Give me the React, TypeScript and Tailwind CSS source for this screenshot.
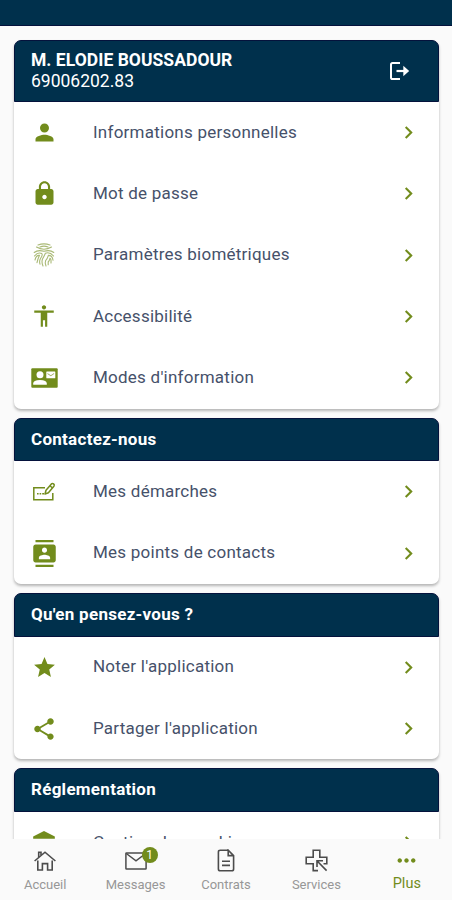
import { FC, ReactNode } from "react";
import {
  MdAccessibility,
  MdAccountBalance,
  MdChevronRight,
  MdContacts,
  MdLock,
  MdMoreHoriz,
  MdPerson,
  MdShare,
  MdStar,
} from "react-icons/md";

interface IRow {
  icon: ReactNode;
  label: string;
}

interface ISection {
  title: string;
  rows: IRow[];
}

const LogoutIcon: FC = () => (
  <svg width="21" height="20" viewBox="0 0 21 20" fill="none">
    <path
      d="M11 2H3.6Q2 2 2 3.6V16.4Q2 18 3.6 18H11"
      stroke="white"
      strokeWidth="2"
    />
    <path d="M7.5 10H15" stroke="white" strokeWidth="2.2" />
    <path d="M14.3 4.8L20.2 10L14.3 15.2Z" fill="white" />
  </svg>
);

const FingerprintIcon: FC = () => (
  <svg
    width="22"
    height="26"
    viewBox="0 0 22 26"
    fill="none"
    stroke="currentColor"
    strokeWidth="1.1"
    strokeLinecap="round"
    className="opacity-60"
  >
    <path d="M5 3Q11 0.8 17 3" />
    <path d="M3.5 5Q11 9.4 18.5 5" />
    <path d="M7 5Q11 3.2 15 5" />
    <path d="M1.2 10.5Q5 7.4 11 9.3Q17 7.4 20.8 10.5" />
    <path d="M1.5 14Q5 9.7 8.8 11.6Q10 13 7.5 16.5Q6 19 7 22.2" />
    <path d="M20.5 14Q17 9.7 12.4 11.2Q11 14.5 9.5 17Q8.3 20 10 24" />
    <path d="M2 18Q3.2 13 6.4 13.4Q5 16.2 4 20.6" />
    <path d="M20 18.2Q19.4 13.4 15.4 13.4Q14.4 16.8 12.6 18.6Q11.6 21 13 24" />
    <path d="M18 21Q18.3 16.4 17 16.4Q16.4 18.8 15.2 20V22.8" />
  </svg>
);

const ContactCardIcon: FC = () => (
  <svg width="27" height="20" viewBox="0 0 27 20" fill="currentColor">
    <rect x="0.3" y="0.3" width="26.4" height="19.4" rx="1" />
    <g fill="white">
      <circle cx="9" cy="6.7" r="3.5" />
      <path d="M2.2 16.8V15.6Q2.2 11.9 9 11.9T15.8 15.6V16.8Z" />
      <rect x="15.3" y="3.6" width="9" height="6.6" rx="0.5" />
    </g>
    <path d="M16.5 5.1L19.8 7.2L23.1 5.1V6.1L19.8 8.2L16.5 6.1Z" opacity="0.7" />
  </svg>
);

const FormIcon: FC = () => (
  <svg
    width="24"
    height="20"
    viewBox="0 0 24 20"
    fill="none"
    stroke="currentColor"
    strokeWidth="1.5"
  >
    <path d="M13 5.8H1.8V17.7H20.8V11" />
    <path d="M5 11.7H6.6M7.6 11.7H9.2M10.2 11.7H12" />
    <path
      d="M13 12L14 8.3L19.4 1.9Q20.4 1 21.6 1.9Q22.8 3 21.9 4.2L16.4 10.8L13 12ZM18 3.8L20.5 6"
      strokeLinejoin="round"
    />
  </svg>
);

const HomeIcon: FC = () => (
  <svg
    width="24"
    height="22"
    viewBox="0 0 24 22"
    fill="none"
    stroke="currentColor"
    strokeWidth="1.6"
  >
    <path d="M1.6 11L12 2.2L22.4 11" />
    <path d="M5.7 7V2.2H8V5" />
    <path d="M4.8 10.6V20H9.4V13.6H14.6V20H19.2V10.6" />
  </svg>
);

const MailIcon: FC = () => (
  <svg
    width="22"
    height="18"
    viewBox="0 0 22 18"
    fill="none"
    stroke="currentColor"
    strokeWidth="1.5"
  >
    <rect x="0.9" y="0.9" width="20.2" height="16.2" rx="0.6" />
    <path d="M1.3 1.5L11 8.8L20.7 1.5" />
  </svg>
);

const DocumentIcon: FC = () => (
  <svg
    width="18"
    height="23"
    viewBox="0 0 18 23"
    fill="none"
    stroke="currentColor"
    strokeWidth="1.6"
  >
    <path d="M11.2 1.2H3.2Q1.4 1.2 1.4 3V20Q1.4 21.8 3.2 21.8H14.8Q16.6 21.8 16.6 20V6.6L11.2 1.2V6.6H16.6" />
    <path d="M5 12.2H13M5 16.4H13" />
  </svg>
);

const ServicesIcon: FC = () => (
  <svg
    width="23"
    height="23"
    viewBox="0 0 23 23"
    fill="none"
    stroke="currentColor"
    strokeWidth="1.6"
  >
    <path d="M13 21.6H8.2V14.8H1.2V8.2H8.2V1.2H14.8V8.2H21.8V14.8H18.5" />
    <path d="M21.6 21.6L12.4 12.2M12 18V11.8H18" />
  </svg>
);

const accountRows: IRow[] = [
  { icon: <MdPerson size={27} />, label: "Informations personnelles" },
  { icon: <MdLock size={27} />, label: "Mot de passe" },
  { icon: <FingerprintIcon />, label: "Paramètres biométriques" },
  { icon: <MdAccessibility size={26} />, label: "Accessibilité" },
  { icon: <ContactCardIcon />, label: "Modes d'information" },
];

const sections: ISection[] = [
  {
    title: "Contactez-nous",
    rows: [
      { icon: <FormIcon />, label: "Mes démarches" },
      { icon: <MdContacts size={27} />, label: "Mes points de contacts" },
    ],
  },
  {
    title: "Qu'en pensez-vous ?",
    rows: [
      { icon: <MdStar size={25} />, label: "Noter l'application" },
      { icon: <MdShare size={26} />, label: "Partager l'application" },
    ],
  },
  {
    title: "Réglementation",
    rows: [
      { icon: <MdAccountBalance size={26} />, label: "Gestion des cookies" },
    ],
  },
];

const Row: FC<IRow> = ({ icon, label }) => (
  <li className="flex items-center h-[61.4px] pl-[14px] pr-[18px]">
    <span className="flex items-center justify-center w-8 text-[#728c1c]">
      {icon}
    </span>
    <span className="flex-1 ml-[33px] text-[17px] tracking-[0.24px] whitespace-nowrap text-[#46516a]">
      {label}
    </span>
    <MdChevronRight size={25} className="text-[#728c1c]" />
  </li>
);

const Card: FC<{ header: ReactNode; rows: IRow[] }> = ({ header, rows }) => (
  <section className="rounded-[7px] bg-white shadow-[0_2px_3px_rgba(0,0,0,0.28)]">
    {header}
    <ul>
      {rows.map((row) => (
        <Row key={row.label} {...row} />
      ))}
    </ul>
  </section>
);

const App: FC = () => {
  return (
    <div className="flex flex-col h-[900px] w-[452px] overflow-hidden bg-[#fafafa] font-['Roboto',sans-serif]">
      {/* status bar */}
      <div className="h-[26px] shrink-0 bg-[#00304c] border-b border-[#04123c]" />

      {/* list of cards */}
      <main className="flex-1 min-h-0 overflow-hidden pt-[14.4px] pl-[14px] pr-[13px] space-y-[9px]">
        <Card
          rows={accountRows}
          header={
            <header className="flex items-center justify-between h-[61.2px] pl-4 pr-7 rounded-t-[7px] bg-[#00304c] border border-[#04123c] text-white">
              <div className="text-[17.5px] leading-[21px]">
                <h1 className="font-bold tracking-[0.04px]">
                  M. ELODIE BOUSSADOUR
                </h1>
                <p>69006202.83</p>
              </div>
              <LogoutIcon />
            </header>
          }
        />
        {sections.map((section) => (
          <Card
            key={section.title}
            rows={section.rows}
            header={
              <header className="flex items-center h-[43.6px] pl-4 rounded-t-[7px] bg-[#00304c] border border-[#04123c] text-white">
                <h2 className="text-[17px] font-bold tracking-[0.28px]">
                  {section.title}
                </h2>
              </header>
            }
          />
        ))}
      </main>

      {/* bottom navigation */}
      <nav className="grid grid-cols-5 h-[61px] shrink-0 bg-[#fafafa] text-[13px] text-[#979797]">
        <a className="flex flex-col items-center">
          <span className="flex items-center h-[43px] -mb-[7px] text-[#4c4c4c]">
            <HomeIcon />
          </span>
          Accueil
        </a>
        <a className="flex flex-col items-center">
          <span className="relative flex items-center h-[43px] -mb-[7px] text-[#4c4c4c]">
            <MailIcon />
            <span className="absolute left-[17px] top-[8px] flex items-center justify-center size-4 rounded-full bg-[#728c1c] text-[12px] leading-4 text-white">
              1
            </span>
          </span>
          Messages
        </a>
        <a className="flex flex-col items-center">
          <span className="flex items-center h-[43px] -mb-[7px] text-[#4c4c4c]">
            <DocumentIcon />
          </span>
          Contrats
        </a>
        <a className="flex flex-col items-center">
          <span className="flex items-center h-[43px] -mb-[7px] text-[#4c4c4c]">
            <ServicesIcon />
          </span>
          Services
        </a>
        <a className="flex flex-col items-center text-[14.5px] text-[#728c1c]">
          <span className="flex items-center h-[43px] -mb-[9px]">
            <MdMoreHoriz size={27} />
          </span>
          Plus
        </a>
      </nav>
    </div>
  );
};

export default App;
